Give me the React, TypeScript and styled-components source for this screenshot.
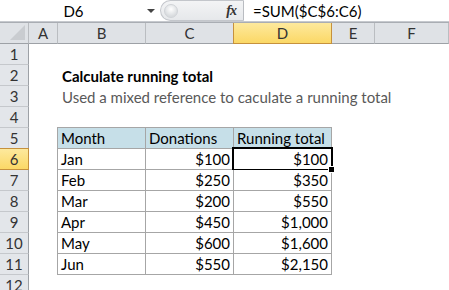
import React from 'react'
import styled, { createGlobalStyle } from 'styled-components'

const GlobalStyle = createGlobalStyle`
  html, body {
    margin: 0;
    padding: 0;
    background: #ffffff;
    overflow: hidden;
  }
  body {
    font-family: Lato, "Open Sans", sans-serif;
  }
`

const COLS = [
  { key: '', width: 29 },
  { key: 'A', width: 29 },
  { key: 'B', width: 88 },
  { key: 'C', width: 88 },
  { key: 'D', width: 98 },
  { key: 'E', width: 43 },
  { key: 'F', width: 74 },
]

const data = [
  ['Jan', '$100', '$100'],
  ['Feb', '$250', '$350'],
  ['Mar', '$200', '$550'],
  ['Apr', '$450', '$1,000'],
  ['May', '$600', '$1,600'],
  ['Jun', '$550', '$2,150'],
]

export default function App() {
  const rows: React.ReactNode[] = []

  for (let r = 1; r <= 12; r++) {
    const cells: React.ReactNode[] = []
    const inTable = r >= 5 && r <= 11
    const isHead = r === 5
    const rec = r >= 6 ? data[r - 6] : null

    cells.push(
      <RowHead key="h" $active={r === 6}>
        {r}
      </RowHead>
    )
    cells.push(<Cell key="A" />)

    if (r === 2) {
      cells.push(
        <Cell key="B" $span={5}>
          <Title>Calculate running total</Title>
        </Cell>
      )
    } else if (r === 3) {
      cells.push(
        <Cell key="B" $span={5}>
          <Subtitle>Used a mixed reference to caculate a running total</Subtitle>
        </Cell>
      )
    } else if (inTable) {
      const b = isHead ? 'Month' : rec![0]
      const c = isHead ? 'Donations' : rec![1]
      const d = isHead ? 'Running total' : rec![2]
      cells.push(
        <TableCell key="B" $head={isHead} $first>
          {b}
        </TableCell>
      )
      cells.push(
        <TableCell key="C" $head={isHead} $num={!isHead}>
          {c}
        </TableCell>
      )
      cells.push(
        <TableCell key="D" $head={isHead} $num={!isHead} $selected={r === 6}>
          {d}
        </TableCell>
      )
      cells.push(<Cell key="E" />)
      cells.push(<Cell key="F" />)
    } else {
      ;['B', 'C', 'D', 'E', 'F'].forEach((k) => cells.push(<Cell key={k} />))
    }

    rows.push(<React.Fragment key={r}>{cells}</React.Fragment>)
  }

  return (
    <>
      <GlobalStyle />
      <Window>
        <FormulaBar>
          <NameBox>
            <NameText>D6</NameText>
            <DropArrow />
          </NameBox>
          <Divider>
            <Grip />
            <FxLabel>fx</FxLabel>
          </Divider>
          <FormulaInput>=SUM($C$6:C6)</FormulaInput>
        </FormulaBar>
        <Gap />
        <Sheet>
          <Corner>
            <svg width="15" height="15" viewBox="0 0 15 15">
              <polygon points="15,0 15,15 0,15" fill="#c9ccd0" />
            </svg>
          </Corner>
          {COLS.slice(1).map((c) => (
            <ColHead key={c.key} $active={c.key === 'D'}>
              {c.key}
            </ColHead>
          ))}
          {rows}
        </Sheet>
      </Window>
    </>
  )
}

const Window = styled.div`
  width: 449px;
  height: 290px;
  display: flex;
  flex-direction: column;
  background: #ffffff;
  font-family: Lato, "Open Sans", sans-serif;
  font-size: 15px;
  color: #000;
`

const FormulaBar = styled.div`
  display: flex;
  height: 21px;
  background: #ffffff;
  border-bottom: 1px solid #c6c9ce;
`

const NameBox = styled.div`
  width: 160px;
  display: flex;
  align-items: center;
  position: relative;
`

const NameText = styled.div`
  flex: 1;
  text-align: center;
  font-size: 15px;
  color: #000;
`

const DropArrow = styled.div`
  width: 0;
  height: 0;
  margin-right: 5px;
  border-left: 4px solid transparent;
  border-right: 4px solid transparent;
  border-top: 4px solid #444;
`

const Divider = styled.div`
  width: 84px;
  display: flex;
  align-items: center;
  justify-content: space-between;
  background: linear-gradient(#f3f4f5, #e6e8eb);
  border: 1px solid #c3c6cb;
  border-right: 1px solid #b9bcc1;
  border-radius: 11px 0 0 11px;
  box-sizing: border-box;
  height: 21px;
  padding: 0 7px 0 3px;
`

const Grip = styled.div`
  width: 12px;
  height: 12px;
  border-radius: 50%;
  background: radial-gradient(circle at 50% 35%, #ffffff, #d9dcdf 70%);
  border: 1px solid #d0d3d7;
`

const FxLabel = styled.div`
  font-family: "Liberation Serif", serif;
  font-style: italic;
  font-weight: bold;
  font-size: 14px;
  color: #333;
  letter-spacing: -1px;
`

const FormulaInput = styled.div`
  flex: 1;
  display: flex;
  align-items: center;
  padding-left: 9px;
  font-size: 15px;
  color: #000;
`

const Gap = styled.div`
  height: 2px;
  background: #ffffff;
  border-bottom: 1px solid #a9adb3;
`

const Sheet = styled.div`
  display: grid;
  grid-template-columns: ${COLS.map((c) => c.width + 'px').join(' ')};
  grid-template-rows: 21px;
  grid-auto-rows: 21px;
`

const Corner = styled.div`
  background: #dfe2e6;
  border-right: 1px solid #b8bbbf;
  border-bottom: 1px solid #9da1a6;
  box-sizing: border-box;
  display: flex;
  align-items: flex-end;
  justify-content: flex-end;
  padding: 0 3px 3px 0;
`

const ColHead = styled.div<{ $active?: boolean }>`
  box-sizing: border-box;
  display: flex;
  align-items: center;
  justify-content: center;
  font-size: 15px;
  color: #333;
  background: ${(p) =>
    p.$active ? 'linear-gradient(#fde99d, #fbd866)' : '#dfe2e6'};
  border-right: 1px solid ${(p) => (p.$active ? '#c6913d' : '#babdc1')};
  border-left: ${(p) => (p.$active ? '1px solid #c6913d' : 'none')};
  border-bottom: 1px solid ${(p) => (p.$active ? '#c6913d' : '#9da1a6')};
  margin-left: ${(p) => (p.$active ? '-1px' : '0')};
`

const RowHead = styled.div<{ $active?: boolean }>`
  box-sizing: border-box;
  display: flex;
  align-items: center;
  justify-content: center;
  font-size: 15px;
  color: #333;
  background: ${(p) =>
    p.$active ? 'linear-gradient(#fde99d, #fbd866)' : '#e3e6ea'};
  border-right: 1px solid ${(p) => (p.$active ? '#c6913d' : '#9da1a6')};
  border-bottom: 1px solid ${(p) => (p.$active ? '#c6913d' : '#c5c8cc')};
  border-top: ${(p) => (p.$active ? '1px solid #c6913d' : 'none')};
  margin-top: ${(p) => (p.$active ? '-1px' : '0')};
`

const Cell = styled.div<{ $span?: number }>`
  grid-column: span ${(p) => p.$span || 1};
  display: flex;
  align-items: center;
  padding-left: 4px;
  overflow: visible;
  white-space: nowrap;
`

const Title = styled.span`
  font-weight: bold;
  font-size: 15px;
`

const Subtitle = styled.span`
  color: #595959;
  font-size: 15px;
`

const TableCell = styled.div<{
  $head?: boolean
  $num?: boolean
  $first?: boolean
  $selected?: boolean
}>`
  position: relative;
  box-sizing: border-box;
  display: flex;
  align-items: center;
  justify-content: ${(p) => (p.$num ? 'flex-end' : 'flex-start')};
  padding: 0 3px;
  white-space: nowrap;
  background: ${(p) => (p.$head ? '#c6dfe8' : '#ffffff')};
  border-right: 1px solid #a6a6a6;
  border-bottom: 1px solid #a6a6a6;
  border-left: ${(p) => (p.$first ? '1px solid #a6a6a6' : 'none')};
  border-top: ${(p) => (p.$head ? '1px solid #a6a6a6' : 'none')};
  margin-left: ${(p) => (p.$first ? '-1px' : '0')};
  margin-top: ${(p) => (p.$head ? '-1px' : '0')};
  height: ${(p) => (p.$head ? '22px' : 'auto')};

  ${(p) =>
    p.$selected &&
    `
    &::after {
      content: '';
      position: absolute;
      left: -2px;
      top: -2px;
      right: -2px;
      bottom: -2px;
      border: 2px solid #000;
    }
    &::before {
      content: '';
      position: absolute;
      right: -4px;
      bottom: -4px;
      width: 5px;
      height: 5px;
      background: #000;
      border: 1px solid #fff;
      z-index: 2;
    }
  `}
`
